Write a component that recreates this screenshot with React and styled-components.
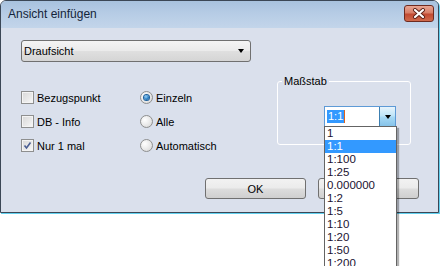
import React from 'react';
import styled, { createGlobalStyle } from 'styled-components';

const Global = createGlobalStyle`
  html, body { margin: 0; padding: 0; background: #ffffff; }
  body { font-family: "Liberation Sans", Arial, sans-serif; font-size: 11px; color: #000; }
  #root { width: 440px; height: 266px; overflow: hidden; }
`;

const Window = styled.div`
  position: relative;
  box-sizing: border-box;
  width: 439px;
  height: 213px;
  border: 1px solid #3b4756;
  border-radius: 6px 6px 0 0;
  box-shadow: 1px 1px 0 #62d0ee;
  background: #dae0ec;
  display: flex;
  flex-direction: column;
`;

const TitleBar = styled.div`
  height: 27px;
  flex: none;
  display: flex;
  align-items: flex-start;
  justify-content: space-between;
  padding: 0 4px 0 7px;
  border-radius: 5px 5px 0 0;
  background: linear-gradient(#a8c2de 0%, #b6cce5 45%, #c3d5ea 100%);
`;

const Title = styled.span`
  font-size: 12px;
  line-height: 12px;
  margin-top: 7px;
  color: #14243a;
`;

const CloseButton = styled.div`
  box-sizing: border-box;
  width: 30px;
  height: 17px;
  margin-top: 4px;
  border: 1px solid #6e2a1f;
  border-radius: 3px;
  background: linear-gradient(#e8a593 0%, #d87f68 45%, #c24a32 55%, #cf6a4c 100%);
  display: flex;
  align-items: center;
  justify-content: center;
`;

const Client = styled.div`
  flex: 1;
  display: flex;
  flex-direction: column;
  padding: 12px 0 0 20px;
`;

const DropCombo = styled.div`
  box-sizing: border-box;
  width: 230px;
  height: 22px;
  border: 1px solid #707070;
  border-radius: 3px;
  background: linear-gradient(#f4f4f4 0%, #ebebeb 48%, #dfdfdf 52%, #d5d5d5 100%);
  display: flex;
  align-items: center;
  justify-content: space-between;
  padding: 0 6px 0 2px;
`;

const Arrow = styled.span`
  width: 0;
  height: 0;
  border-left: 3.5px solid transparent;
  border-right: 3.5px solid transparent;
  border-top: 4px solid #000;
`;

const MiddleRow = styled.div`
  display: flex;
  align-items: flex-start;
  margin-top: 13px;
`;

const OptionCol = styled.div`
  width: ${p => p.$w}px;
  padding-top: 16px;
  display: flex;
  flex-direction: column;
  gap: 11px;
`;

const Option = styled.div`
  display: flex;
  align-items: center;
  height: 13px;
  gap: 3px;
  white-space: nowrap;
`;

const CheckBox = styled.span`
  box-sizing: border-box;
  width: 13px;
  height: 13px;
  border: 1px solid #8e8f8f;
  background: linear-gradient(135deg, #d8d8d8 0%, #eaeaea 60%, #fbfbfb 100%);
  box-shadow: inset 0 0 0 1px #f4f4f4;
  display: flex;
  align-items: center;
  justify-content: center;
`;

const Radio = styled.span`
  box-sizing: border-box;
  width: 13px;
  height: 13px;
  border-radius: 50%;
  border: 1px solid #8e8f8f;
  background: radial-gradient(circle at 35% 35%, #ffffff 0%, #e6e6e6 60%, #cfcfcf 100%);
  display: flex;
  align-items: center;
  justify-content: center;
`;

const RadioDot = styled.span`
  width: 5px;
  height: 5px;
  border-radius: 50%;
  background: radial-gradient(circle at 40% 35%, #9ad0f5 0%, #2a7fc4 55%, #0d4d8a 100%);
  box-shadow: 0 0 0 1px #1d5f9b;
`;

const Group = styled.fieldset`
  box-sizing: border-box;
  width: 134px;
  height: 70px;
  margin: 0;
  padding: 0;
  border: 1px solid #ffffff;
  border-radius: 3px;
`;

const Legend = styled.legend`
  margin-left: 4px;
  padding: 0 2px;
  font-size: 11px;
  line-height: 13px;
  color: #000;
`;

const ScaleCombo = styled.div`
  position: relative;
  box-sizing: border-box;
  width: 72px;
  height: 21px;
  margin: 18px 14px 0 auto;
  border: 1px solid #5d9ad6;
  background: #fff;
  display: flex;
`;

const EditArea = styled.div`
  flex: 1;
  display: flex;
  align-items: center;
  padding-left: 2px;
`;

const Selected = styled.span`
  background: #3399ff;
  color: #fff;
  line-height: 13px;
  padding: 0 1px;
`;

const Caret = styled.span`
  width: 1px;
  height: 13px;
  background: #e0641c;
`;

const DropButton = styled.div`
  box-sizing: border-box;
  width: 16px;
  border-left: 1px solid #3c7fb1;
  background: linear-gradient(#e7f4fc 0%, #bde4f8 48%, #a7d9f5 52%, #86c3e9 100%);
  display: flex;
  align-items: center;
  justify-content: center;
`;

const List = styled.div`
  position: absolute;
  top: 100%;
  left: -1px;
  width: 73px;
  box-sizing: border-box;
  background: #fff;
  border: 1px solid #646464;
  box-shadow: 2px 2px 1px rgba(0, 0, 0, 0.3);
  z-index: 5;
`;

const Item = styled.div`
  height: 13px;
  line-height: 13px;
  padding-left: 2px;
  font-size: 11.5px;
  color: ${p => (p.$active ? '#fff' : '#1a1230')};
  background: ${p => (p.$active ? '#3399ff' : 'transparent')};
`;

const ButtonRow = styled.div`
  display: flex;
  justify-content: flex-end;
  gap: 12px;
  margin-top: 26px;
  padding-right: 19px;
`;

const Button = styled.div`
  box-sizing: border-box;
  width: 101px;
  height: 21px;
  border: 1px solid #707070;
  border-radius: 3px;
  background: linear-gradient(#f2f2f2 0%, #ebebeb 48%, #dddddd 52%, #cfcfcf 100%);
  display: flex;
  align-items: center;
  justify-content: center;
  font-size: 11px;
`;

const checks = ['Bezugspunkt', 'DB - Info', 'Nur 1 mal'];
const radios = ['Einzeln', 'Alle', 'Automatisch'];
const scales = ['1', '1:1', '1:100', '1:25', '0.000000', '1:2', '1:5', '1:10', '1:20', '1:50', '1:200'];

export default function App() {
  return (
    <>
      <Global />
      <Window>
        <TitleBar>
          <Title>Ansicht einfügen</Title>
          <CloseButton>
            <svg width="14" height="11" viewBox="0 0 14 11">
              <path d="M3 2 L11 9 M11 2 L3 9" stroke="#5a2016" strokeWidth="4" strokeLinecap="round" />
              <path d="M3 2 L11 9 M11 2 L3 9" stroke="#ffffff" strokeWidth="2.2" strokeLinecap="round" />
            </svg>
          </CloseButton>
        </TitleBar>
        <Client>
          <DropCombo>
            <span>Draufsicht</span>
            <Arrow />
          </DropCombo>
          <MiddleRow>
            <OptionCol $w={119}>
              {checks.map((c, i) => (
                <Option key={c}>
                  <CheckBox>
                    {i === 2 && (
                      <svg width="9" height="9" viewBox="0 0 9 9">
                        <path d="M1.5 4.5 L3.5 7 L7.5 1.5" stroke="#4a5e93" strokeWidth="1.6" fill="none" />
                      </svg>
                    )}
                  </CheckBox>
                  {c}
                </Option>
              ))}
            </OptionCol>
            <OptionCol $w={137}>
              {radios.map((r, i) => (
                <Option key={r}>
                  <Radio>{i === 0 && <RadioDot />}</Radio>
                  {r}
                </Option>
              ))}
            </OptionCol>
            <Group>
              <Legend>Maßstab</Legend>
              <ScaleCombo>
                <EditArea>
                  <Selected>1:1</Selected>
                  <Caret />
                </EditArea>
                <DropButton>
                  <Arrow />
                </DropButton>
                <List>
                  {scales.map(s => (
                    <Item key={s} $active={s === '1:1'}>{s}</Item>
                  ))}
                </List>
              </ScaleCombo>
            </Group>
          </MiddleRow>
          <ButtonRow>
            <Button>OK</Button>
            <Button>Abbrechen</Button>
          </ButtonRow>
        </Client>
      </Window>
    </>
  );
}
